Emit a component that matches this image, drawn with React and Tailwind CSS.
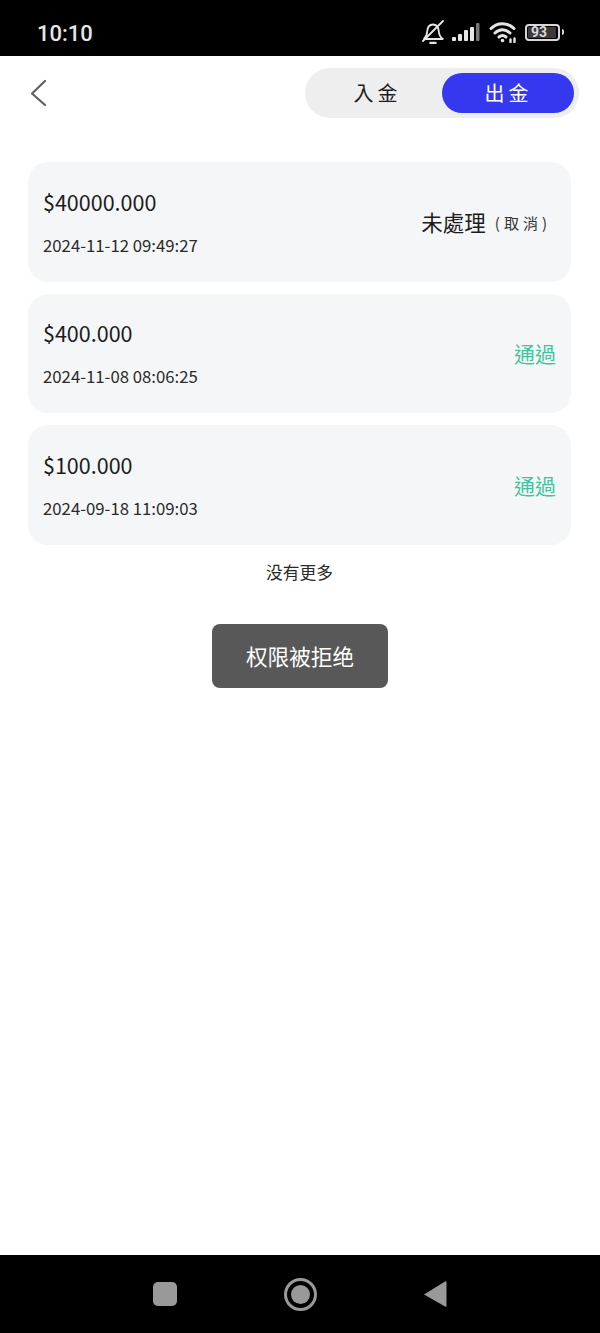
import React from 'react';

const records = [
  { amount: '$40000.000', time: '2024-11-12 09:49:27', pending: true },
  { amount: '$400.000', time: '2024-11-08 08:06:25' },
  { amount: '$100.000', time: '2024-09-18 11:09:03' },
];

function StatusIcons() {
  return (
    <div className="-mt-[2px] flex items-center">
      {/* muted bell */}
      <svg width="24" height="24" viewBox="0 0 24 24" fill="none" stroke="#e6e6e6" strokeWidth="1.8" strokeLinecap="round" strokeLinejoin="round">
        <path d="M4 19c2-2 3-4 3.2-7.5C7.5 7 9.5 4.5 13 4.500s5.500 2.500 5.800 7c.2 3.500 1.500 5.500 4 7.500z" />
        <path d="M10.500 23h5" strokeWidth="2.400" />
        <path d="M3 21L23 1" />
      </svg>
      {/* signal */}
      <svg className="ml-[7px]" width="29" height="20" viewBox="0 0 29 20" fill="#e6e6e6">
        <rect x="1" y="15" width="4" height="4" rx="1" />
        <rect x="7" y="12" width="4" height="7" rx="1" />
        <rect x="13" y="8" width="4" height="11" rx="1" />
        <rect x="19" y="5" width="4" height="14" rx="1" />
        <rect x="25" y="1" width="3.500" height="18" rx="1" fill="#777" />
      </svg>
      {/* wifi */}
      <svg className="ml-[9px]" width="28" height="22" viewBox="0 0 28 22" fill="none" stroke="#e6e6e6" strokeWidth="3" strokeLinecap="round">
        <path d="M2 7.500C8.500 1 18.500 1 25 7.500" />
        <path d="M6 12c4.500-4.200 10.500-4.200 15 0" />
        <path d="M10 16c2.200-1.800 4.800-1.800 7 0" />
        <circle cx="13.500" cy="19.500" r="1.800" fill="#e6e6e6" stroke="none" />
        <path d="M21.500 21v-2.500M25.500 21v-3.500" strokeWidth="2.400" />
      </svg>
      {/* battery */}
      <div className="ml-[8px] flex items-center">
        <div className="flex h-[17px] w-[35px] items-center rounded-[4px] border-2 border-[#d8d8d8] p-[1px]">
          <div className="flex h-full w-[28px] items-center rounded-[1px] bg-[#3a3a3a] pl-[3px] font-['Roboto',sans-serif] text-[14px] font-bold leading-none text-[#d8d8d8]">
            93
          </div>
        </div>
        <div className="ml-[2px] h-[6px] w-[2px] rounded-r-sm bg-[#d0d0d0]" />
      </div>
    </div>
  );
}

function RecordCard({ record }) {
  return (
    <div className="flex h-[119.5px] items-center justify-between rounded-[20px] bg-[#f5f6f8] pl-[15px] pr-[15px]">
      <div className="pb-[2px]">
        <div className="text-[21.5px] leading-[30px] text-[#1c1c1c]">{record.amount}</div>
        <div className="mt-[18px] text-[16.75px] leading-[20px] text-[#2a2a2a]">{record.time}</div>
      </div>
      {record.pending ? (
        <div className="flex items-center pr-[5px]">
          <span className="text-[21.5px] leading-[30px] text-[#1c1c1c]">未處理</span>
          <span className="ml-[9px] mt-[3px] text-[15px] tracking-[4px] text-[#333]">(取消)</span>
        </div>
      ) : (
        <span className="text-[21px] leading-[30px] text-[#3fc6a0]">通過</span>
      )}
    </div>
  );
}

export default function App() {
  return (
    <div className="relative flex h-[1333px] w-[600px] flex-col bg-white font-['Noto_Sans_CJK_TC','Noto_Sans',sans-serif]">
      {/* Status bar */}
      <div className="flex h-[56px] items-center justify-between bg-black pl-[37px] pr-[36px] pt-[10px]">
        <span className="font-['Roboto',sans-serif] text-[22px] font-medium text-[#e6e6e6]">10:10</span>
        <StatusIcons />
      </div>

      {/* Header */}
      <div className="flex items-center justify-between pl-[30px] pr-[21px] pt-[12px]">
        <svg width="17" height="28" viewBox="0 0 17 28" fill="none" stroke="#606060" strokeWidth="2.200" strokeLinecap="round" strokeLinejoin="round">
          <path d="M15 2L2 14.500 15 26" />
        </svg>
        <div className="flex h-[50px] w-[274px] items-center rounded-full bg-[#eeeeee] pl-[5px] pr-[5px]">
          <div className="flex-1 pl-[3px] text-center text-[20px] tracking-[4px] text-[#1c1c1c]">入金</div>
          <div className="flex h-[40px] w-[132px] items-center justify-center rounded-full bg-[#3439ef] pl-[1px] text-[20px] tracking-[4px] text-white">
            出金
          </div>
        </div>
      </div>

      {/* Records */}
      <div className="flex flex-1 flex-col gap-[12px] pl-[28px] pr-[29px] pt-[44px]">
        {records.map((record) => (
          <RecordCard key={record.time} record={record} />
        ))}
        <div className="pt-[3px] text-center text-[16.75px] leading-[24px] text-[#2a2a2a]">没有更多</div>
      </div>

      {/* Toast */}
      <div className="absolute left-[212px] top-[624px] flex h-[64px] w-[176px] items-center justify-center rounded-[8px] bg-[#585858] text-[21.6px] text-white">
        权限被拒绝
      </div>

      {/* Navigation bar */}
      <div className="flex h-[78px] items-center justify-between bg-black pl-[153px] pr-[153px]">
        <div className="h-[24px] w-[24px] rounded-[5px] bg-[#999999]" />
        <div className="flex h-[33px] w-[33px] items-center justify-center rounded-full border-[3px] border-[#999999]">
          <div className="h-[19px] w-[19px] rounded-full bg-[#999999]" />
        </div>
        <svg width="24" height="28" viewBox="0 0 24 28" fill="#999999">
          <path d="M22 1.500a1 1 0 0 1 1.500 1v23a1 1 0 0 1-1.500 1L1 14.500z" />
        </svg>
      </div>
    </div>
  );
}
